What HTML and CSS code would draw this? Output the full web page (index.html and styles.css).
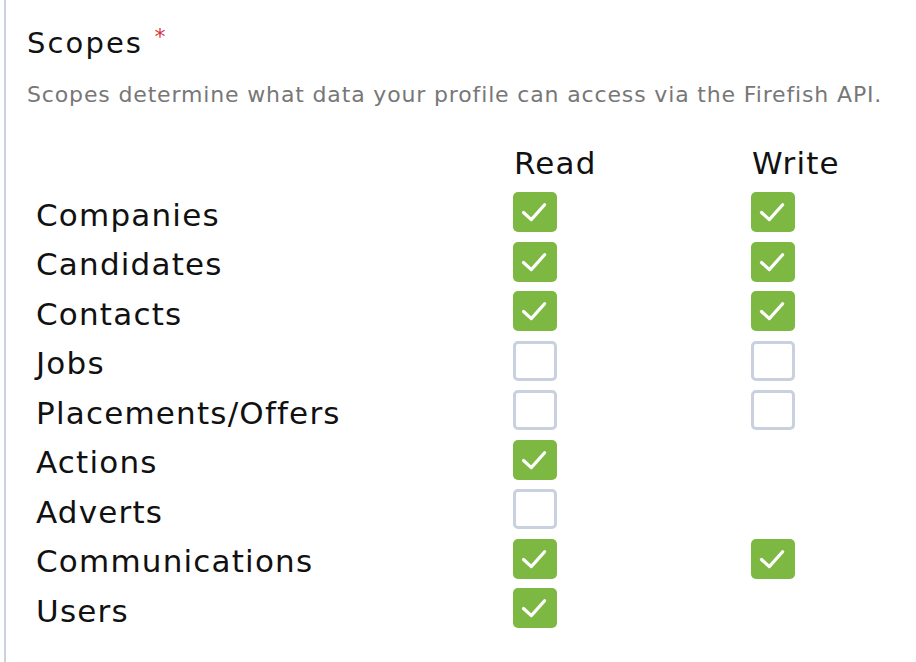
FILE: index.html
```html
<!DOCTYPE html>
<html lang="en">
<head>
<meta charset="utf-8">
<title>Scopes</title>
<link rel="stylesheet" href="styles.css">
</head>
<body>
<div class="panel">
  <div class="title">Scopes <span class="req">*</span></div>
  <div class="desc">Scopes determine what data your profile can access via the Firefish API.</div>
  <div class="scopes">
    <div class="cell label"></div>
    <div class="cell head">Read</div>
    <div class="cell head">Write</div>

    <div class="cell label">Companies</div>
    <div class="cell"><span class="cb on"><svg viewBox="0 0 44 40"><polyline points="10.5,20.5 18.3,27.6 31.6,12.8"/></svg></span></div>
    <div class="cell"><span class="cb on"><svg viewBox="0 0 44 40"><polyline points="10.5,20.5 18.3,27.6 31.6,12.8"/></svg></span></div>

    <div class="cell label">Candidates</div>
    <div class="cell"><span class="cb on"><svg viewBox="0 0 44 40"><polyline points="10.5,20.5 18.3,27.6 31.6,12.8"/></svg></span></div>
    <div class="cell"><span class="cb on"><svg viewBox="0 0 44 40"><polyline points="10.5,20.5 18.3,27.6 31.6,12.8"/></svg></span></div>

    <div class="cell label">Contacts</div>
    <div class="cell"><span class="cb on"><svg viewBox="0 0 44 40"><polyline points="10.5,20.5 18.3,27.6 31.6,12.8"/></svg></span></div>
    <div class="cell"><span class="cb on"><svg viewBox="0 0 44 40"><polyline points="10.5,20.5 18.3,27.6 31.6,12.8"/></svg></span></div>

    <div class="cell label">Jobs</div>
    <div class="cell"><span class="cb"></span></div>
    <div class="cell"><span class="cb"></span></div>

    <div class="cell label">Placements/Offers</div>
    <div class="cell"><span class="cb"></span></div>
    <div class="cell"><span class="cb"></span></div>

    <div class="cell label">Actions</div>
    <div class="cell"><span class="cb on"><svg viewBox="0 0 44 40"><polyline points="10.5,20.5 18.3,27.6 31.6,12.8"/></svg></span></div>
    <div class="cell"></div>

    <div class="cell label">Adverts</div>
    <div class="cell"><span class="cb"></span></div>
    <div class="cell"></div>

    <div class="cell label">Communications</div>
    <div class="cell"><span class="cb on"><svg viewBox="0 0 44 40"><polyline points="10.5,20.5 18.3,27.6 31.6,12.8"/></svg></span></div>
    <div class="cell"><span class="cb on"><svg viewBox="0 0 44 40"><polyline points="10.5,20.5 18.3,27.6 31.6,12.8"/></svg></span></div>

    <div class="cell label">Users</div>
    <div class="cell"><span class="cb on"><svg viewBox="0 0 44 40"><polyline points="10.5,20.5 18.3,27.6 31.6,12.8"/></svg></span></div>
    <div class="cell"></div>
  </div>
</div>
</body>
</html>
```

FILE: styles.css
```css
html, body {
  margin: 0;
  padding: 0;
  background: #ffffff;
}
body {
  font-family: "DejaVu Sans", "Open Sans", sans-serif;
  color: #111111;
  padding-left: 4px;
}
.panel {
  border-left: 2px solid #cad1e0;
  min-height: 662px;
  box-sizing: border-box;
  padding: 25px 0 0 21px;
}
.title {
  height: 36px;
  font-size: 29px;
  line-height: 36px;
  letter-spacing: 2.1px;
  color: #111111;
}
.req {
  color: #d9323a;
  font-size: 22px;
  line-height: 1;
  vertical-align: 9px;
  letter-spacing: 0;
}
.desc {
  margin-top: 19px;
  font-size: 22px;
  line-height: 30px;
  letter-spacing: 0.85px;
  color: #777777;
  white-space: nowrap;
}
.scopes {
  margin: 28px 0 0 9px;
  display: grid;
  grid-template-columns: 477px 238px 1fr;
  grid-auto-rows: 49.5px;
}
.cell {
  display: flex;
  align-items: center;
}
.label, .head {
  align-items: flex-start;
  box-sizing: border-box;
  padding-top: 6px;
  font-size: 31px;
  line-height: 43.5px;
  letter-spacing: 1.2px;
  color: #111111;
  white-space: nowrap;
}
.head {
  padding-top: 4px;
  padding-left: 1px;
}
.cb {
  display: block;
  width: 44px;
  height: 40px;
  box-sizing: border-box;
  border: 3px solid #c9d0de;
  border-radius: 5px;
  background: #ffffff;
}
.cb.on {
  border: none;
  background: #7db843;
}
.cb svg {
  display: block;
  width: 44px;
  height: 40px;
}
.cb polyline {
  fill: none;
  stroke: #ffffff;
  stroke-width: 3.2;
  stroke-linecap: round;
  stroke-linejoin: round;
}
```
